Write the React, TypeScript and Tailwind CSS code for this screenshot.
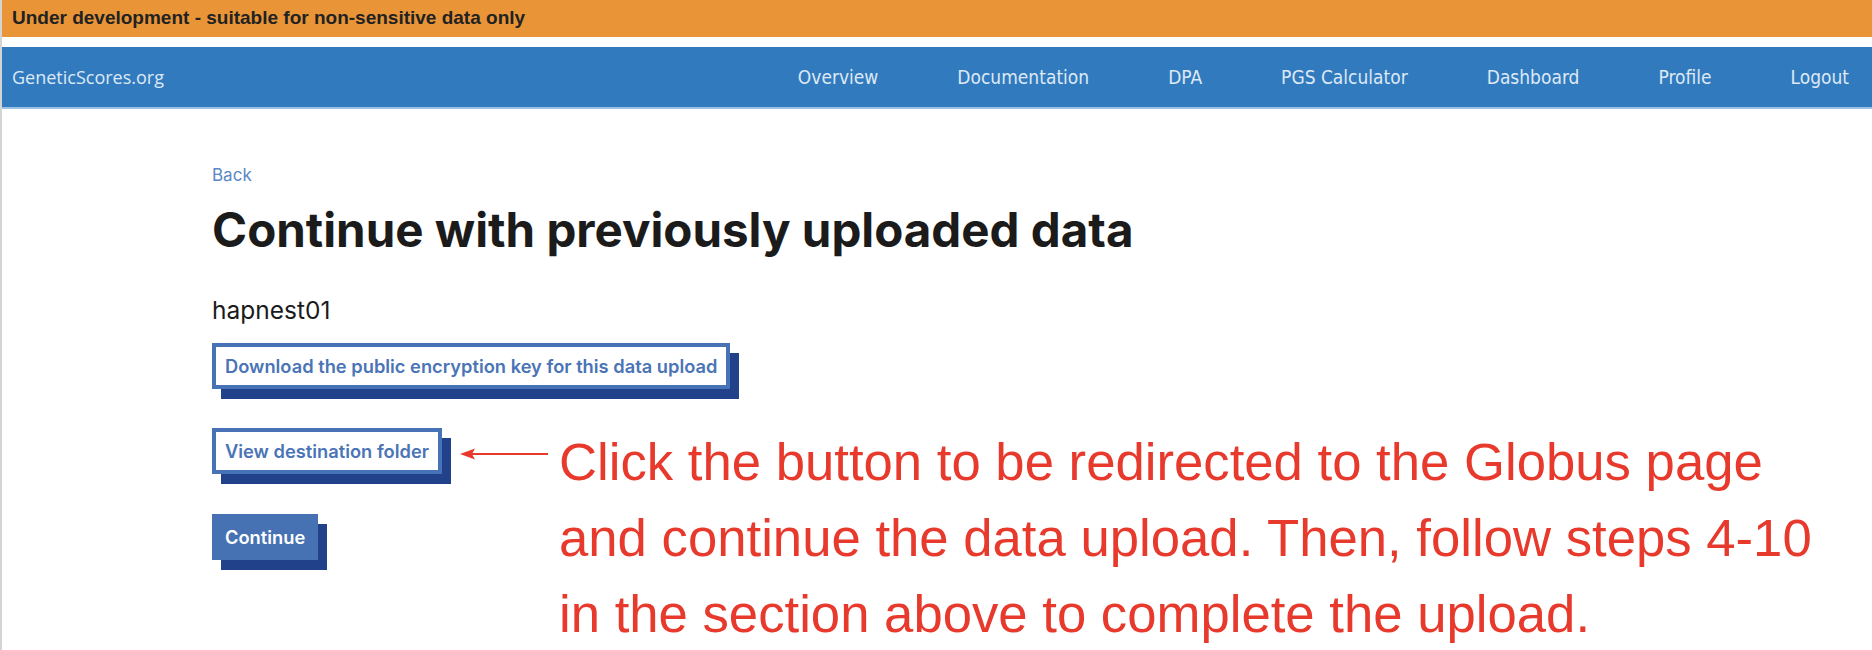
import { ReactNode } from 'react'

const navLinks = ['Overview', 'Documentation', 'DPA', 'PGS Calculator', 'Dashboard', 'Profile', 'Logout']

function OutlineButton({ children }: { children: ReactNode }) {
  return (
    <button
      type="button"
      className="h-[46px] px-[9px] bg-white border-4 border-[#4773b6] shadow-[9px_10px_0_#21428a] text-[18.3px] font-semibold text-[#4a74b6] leading-none"
    >
      {children}
    </button>
  )
}

export default function App() {
  return (
    <div className="min-h-[650px] bg-white border-l-2 border-[#d4d4d4] font-['Inter','Noto_Sans',sans-serif]">
      {/* Bandeau dev */}
      <div className="h-[37px] bg-[#e99537] flex items-center pl-[10px]">
        <span className="text-[19px] font-bold text-[#222] font-['Liberation_Sans',sans-serif]">
          Under development - suitable for non-sensitive data only
        </span>
      </div>

      <div className="h-[10px]" />

      {/* Barre de navigation */}
      <nav className="h-[62px] bg-[#327abe] border-b-2 border-[#9dc2e6] flex items-center justify-between pl-[10px] pr-[23px]">
        <a className="text-[18px] text-[#dde9f5] font-['Open_Sans',sans-serif]">GeneticScores.org</a>
        <ul className="flex gap-[79px] font-['DejaVu_Sans_Condensed','Roboto',sans-serif] text-[19px] text-[#dde9f5]">
          {navLinks.map((l) => (
            <li key={l}>{l}</li>
          ))}
        </ul>
      </nav>

      <main className="pl-[210px] pt-[54px]">
        <a className="block text-[17px] leading-[24px] text-[#5b87c6]">Back</a>
        <h1 className="mt-[15px] text-[47.5px] leading-[56px] font-bold text-[#1b1b1b]">
          Continue with previously uploaded data
        </h1>
        <p className="mt-[36px] text-[24.5px] leading-[32px] text-[#1b1b1b]">hapnest01</p>

        <div className="mt-[17px]">
          <OutlineButton>Download the public encryption key for this data upload</OutlineButton>
        </div>

        <div className="mt-[39px] relative">
          <OutlineButton>View destination folder</OutlineButton>

          {/* Annotation */}
          <svg
            className="absolute left-[248px] top-[19px]"
            width="88"
            height="14"
            viewBox="0 0 88 14"
          >
            <line x1="12" y1="7" x2="88" y2="7" stroke="#e8392d" strokeWidth="2" />
            <path d="M0 7 L15 1.5 L12 7 L15 12.5 Z" fill="#e8392d" />
          </svg>
          <p className="absolute left-[347px] top-[-4px] whitespace-nowrap text-[52.7px] leading-[76px] text-[#e8392d] font-['Liberation_Sans',Arial,sans-serif]">
            Click the button to be redirected to the Globus page
            <br />
            and continue the data upload. Then, follow steps 4-10
            <br />
            in the section above to complete the upload.
          </p>
        </div>

        <div className="mt-[40px]">
          <button
            type="button"
            className="h-[46px] px-[13px] bg-[#4672b4] shadow-[9px_10px_0_#21428a] text-[18.3px] font-semibold text-white leading-none"
          >
            Continue
          </button>
        </div>
      </main>
    </div>
  )
}
